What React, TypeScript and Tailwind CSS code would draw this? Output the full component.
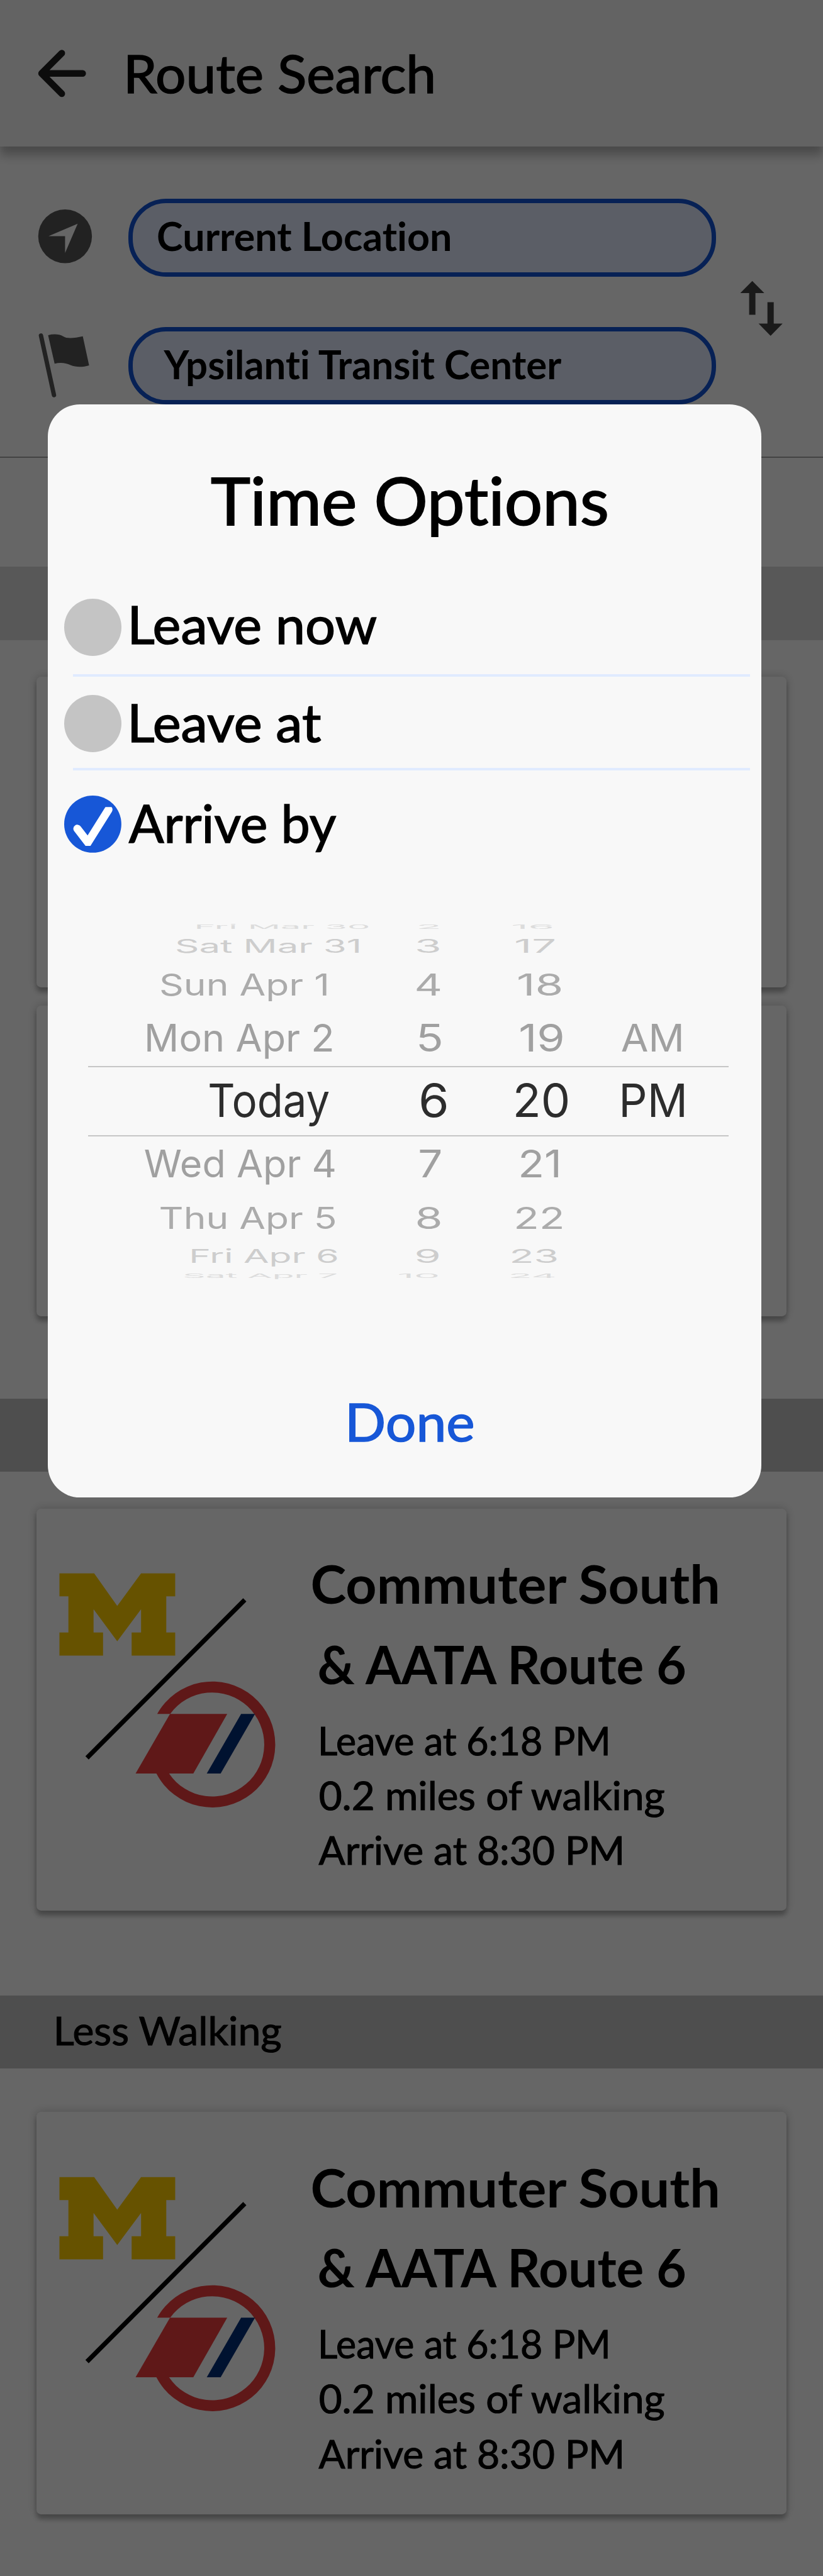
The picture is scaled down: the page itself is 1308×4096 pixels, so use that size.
import React from 'react';

type Face = 'medium' | 'bold' | 'wheel';

// stroke is extra outline thickness, in em, that brings the face to its weight.
const FACES: Record<Face, { family: string; weight: number; stroke: number }> = {
  medium: { family: 'Lato, sans-serif', weight: 400, stroke: 0.018 },
  bold: { family: 'Lato, sans-serif', weight: 700, stroke: 0 },
  wheel: { family: 'Inter, sans-serif', weight: 400, stroke: 0 },
};

const canvas = document.createElement('canvas').getContext('2d')!;

// Measures a string at 100px: ink edges, cap height and baseline position.
function measure(text: string, face: Face) {
  const { family, weight, stroke } = FACES[face];
  canvas.font = `${weight} 100px ${family}`;
  canvas.letterSpacing = '0.01px';
  const m = canvas.measureText(text);
  const cap = canvas.measureText('H').actualBoundingBoxAscent;
  return {
    left: -m.actualBoundingBoxLeft - stroke * 50,
    ink: m.actualBoundingBoxLeft + m.actualBoundingBoxRight + stroke * 100,
    cap,
    baseline: 50 + (m.fontBoundingBoxAscent - m.fontBoundingBoxDescent) / 2,
  };
}

// A line of text whose box is its ink: w wide, cap tall, baseline at the bottom edge.
function Line({
  children,
  w,
  cap,
  face = 'medium',
  size,
  className = '',
  ml = 0,
}: {
  children: string;
  w: number;
  cap: number;
  face?: Face;
  size?: number;
  className?: string;
  ml?: number;
}) {
  const m = measure(children, face);
  const fs = size ?? (cap / m.cap) * 100;
  const k = fs / 100;
  const sx = w / (m.ink * k);
  const sy = cap / (m.cap * k);
  return (
    <div className={`shrink-0 ${className}`} style={{ width: w, height: cap, marginLeft: ml || undefined }}>
      <span
        className="block w-max origin-top-left leading-none whitespace-nowrap [font-variant-ligatures:none]"
        style={{
          fontFamily: FACES[face].family,
          fontWeight: FACES[face].weight,
          fontSize: fs,
          WebkitTextStroke: FACES[face].stroke ? `${FACES[face].stroke}em currentColor` : undefined,
          transform: `translate(${-m.left * k * sx}px, ${cap - m.baseline * k * sy}px) scale(${sx}, ${sy})`,
        }}
      >
        {children}
      </span>
    </div>
  );
}

const CARD = 'ml-16 w-[1312px] rounded-lg bg-white shadow-[0_0_16px_rgba(0,0,0,0.22),0_8px_8px_rgba(0,0,0,0.24)]';

function RouteLogo() {
  return (
    <svg className="mt-[104px] ml-8 h-[428px] w-[400px] shrink-0" viewBox="32 104 400 428">
      <path
        fill="#ffcd00"
        d="M40.2 113.6H101L141.3 170.7L183 113.6H242.7V153.9H227.1V217.1H242.7V257.4H166.5V217.1H183V176.3L141.3 232.4L99.9 176.3V217.1H116.5V257.4H40.2V217.1H55.9V153.9H40.2Z"
      />
      <path d="M88.5 436.5L364.4 160" stroke="#000" strokeWidth="8" />
      <path fill="#ee3d3e" d="M211.2 359.5A110.2 110.2 0 1 1 209.8 464H232A91 91 0 1 0 233.9 359.5Z" />
      <path fill="#ee3d3e" d="M233.6 359.5H333.7L274.4 464H173.4Z" />
      <path fill="#002f78" d="M358 359.5H382.3L322.2 464H297.9Z" />
    </svg>
  );
}

function RouteCard() {
  return (
    <div className={`flex h-[704px] ${CARD}`}>
      <RouteLogo />
      <div className="flex flex-col pt-[101px] pl-[50px]">
        <Line w={711} cap={67} face="bold">Commuter South</Line>
        <Line w={646} cap={67} face="bold" ml={12} className="mt-[73px]">& AATA Route 6</Line>
        <Line w={502} cap={50} ml={15} className="mt-[74px]">Leave at 6:18 PM</Line>
        <Line w={606} cap={50} ml={13} className="mt-[46px]">0.2 miles of walking</Line>
        <Line w={531} cap={50} ml={11} className="mt-[46px]">Arrive at 8:30 PM</Line>
      </div>
    </div>
  );
}

type Cell = [text: string, x: number, w: number];
type WheelRow = { top: number; cap: number; color: string; cells: Cell[] };

const ABOVE: WheelRow[] = [
  { top: 1618, cap: 7.5, color: 'text-[#dcdcdc]', cells: [['Fri Mar 30', 345, 300], ['2', 733, 34], ['16', 897, 69]] },
  { top: 1644.5, cap: 23.5, color: 'text-[#cdcdcd]', cells: [['Sat Mar 31', 309, 318], ['3', 730, 38], ['17', 902, 67]] },
  { top: 1704.5, cap: 38, color: 'text-[#ababab]', cells: [['Sun Apr 1', 282, 289], ['4', 729, 41], ['18', 907, 74]] },
  { top: 1793.5, cap: 48.5, color: 'text-[#a0a0a0]', cells: [['Mon Apr 2', 258, 323], ['5', 733, 38], ['19', 910, 74], ['AM', 1088, 104]] },
];

const SELECTED: WheelRow = {
  top: 1898,
  cap: 58.5,
  color: 'text-[#2d2d2d]',
  cells: [['Today', 367, 209], ['6', 736, 45], ['20', 903, 91], ['PM', 1089, 108]],
};

const BELOW: WheelRow[] = [
  { top: 2013.5, cap: 48, color: 'text-[#a0a0a0]', cells: [['Wed Apr 4', 253, 332], ['7', 734, 36.5], ['21', 911, 65]] },
  { top: 2113, cap: 38, color: 'text-[#ababab]', cells: [['Thu Apr 5', 281, 305], ['8', 730, 40], ['22', 904, 79]] },
  { top: 2187.5, cap: 24, color: 'text-[#cdcdcd]', cells: [['Fri Apr 6', 336, 254], ['9', 729, 39], ['23', 896, 77.5]] },
  { top: 2228.5, cap: 7.5, color: 'text-[#dcdcdc]', cells: [['Sat Apr 7', 322, 266], ['10', 698, 68], ['24', 894, 76]] },
];

function Row({ row, from }: { row: WheelRow; from: number }) {
  return (
    <div className={`flex ${row.color}`} style={{ paddingTop: row.top - from }}>
      {row.cells.map(([text, x, w], i) => {
        const prev = i ? row.cells[i - 1][1] + row.cells[i - 1][2] : 84;
        return (
          <Line key={text} face="wheel" size={76} w={w} cap={row.cap} ml={x - prev}>
            {text}
          </Line>
        );
      })}
    </div>
  );
}

function Rows({ rows, from }: { rows: WheelRow[]; from: number }) {
  return (
    <>
      {rows.map((r, i) => (
        <Row key={r.top} row={r} from={i ? rows[i - 1].top + rows[i - 1].cap : from} />
      ))}
    </>
  );
}

function TimeWheel() {
  return (
    <div className="mt-[126px] h-[617px]">
      <div className="h-[248px]">
        <Rows rows={ABOVE} from={1618} />
      </div>
      <div className="ml-[70px] h-[2px] w-[1120px] bg-[#c6c6c6]" />
      <div className="h-[119px]">
        <Row row={SELECTED} from={1868} />
      </div>
      <div className="ml-[70px] h-[2px] w-[1120px] bg-[#c6c6c6]" />
      <Rows rows={BELOW} from={1989} />
    </div>
  );
}

function TimeOptions() {
  return (
    <div className="absolute top-[708px] left-[84px] h-[1912px] w-[1248px] rounded-[56px] bg-[#f8f8f8] text-black">
      <Line w={694} cap={84} ml={285} className="mt-32">Time Options</Line>
      <div className="mt-32 flex h-[132px] pl-7">
        <div className="size-[100px] shrink-0 rounded-full bg-[#c4c4c4]" />
        <Line w={429} cap={67} ml={18.5} className="mt-[13px]">Leave now</Line>
      </div>
      <div className="ml-11 h-1 w-[1184px] bg-[#e0ebff]" />
      <div className="flex h-40 pt-8 pl-7">
        <div className="size-[100px] shrink-0 rounded-full bg-[#c4c4c4]" />
        <Line w={332} cap={67} ml={18.5} className="mt-[17px]">Leave at</Line>
      </div>
      <div className="ml-11 h-1 w-[1184px] bg-[#e0ebff]" />
      <div className="flex h-36 pt-11 pl-7">
        <svg className="size-[100px] shrink-0" viewBox="0 0 100 100">
          <clipPath id="tick">
            <rect x="10" y="20" width="80" height="68" />
          </clipPath>
          <circle cx="50" cy="50" r="50" fill="#1757d7" />
          <path
            d="M23 58L41.500 82L77.500 24.500"
            fill="none"
            stroke="#fff"
            strokeWidth="14"
            strokeLinecap="round"
            strokeLinejoin="miter"
            clipPath="url(#tick)"
          />
        </svg>
        <Line w={364} cap={67} ml={13} className="mt-[17px]">Arrive by</Line>
      </div>
      <TimeWheel />
      <Line w={217} cap={67} ml={527} className="mt-[222px] text-[#1757d7]">Done</Line>
    </div>
  );
}

function Header() {
  return (
    <header className="relative flex h-64 bg-[#f8f8f8] shadow-[0_0_16px_rgba(0,0,0,0.1),0_16px_16px_rgba(0,0,0,0.24)]">
      <svg className="mt-[82px] ml-[62px] h-[92px] w-[94px] shrink-0" viewBox="62 82 94 92">
        <path
          d="M145 128H73M108.500 92.500L73 128L108.500 163.500"
          fill="none"
          stroke="#1e1e1e"
          strokeWidth="11.500"
          strokeLinecap="round"
          strokeLinejoin="round"
        />
      </svg>
      <Line w={535} cap={67} ml={67} className="mt-[97px]">Route Search</Line>
    </header>
  );
}

const PILL = 'h-[136px] w-[1028px] rounded-[66px] border-8 border-[#1353d5] bg-[#e3ebff]';

function SearchPanel() {
  return (
    <section className="flex h-[543px]">
      <svg className="mt-[111px] ml-16 h-[338px] w-[100px] shrink-0" viewBox="64 367 100 338">
        <circle cx="114" cy="414" r="47" fill="#555" />
        <path d="M136 392L85 413.700H114V443.300Z" fill="#fff" />
        <path d="M71.800 587.800L94.600 692" stroke="#555" strokeWidth="7.600" strokeLinecap="round" />
        <path
          d="M84.300 587C94 584.500 104 585 110.500 589C118 594 131 592 145 589L156 640C145 643.500 133 643.500 123.500 639.500C115 635.500 106 634.500 95.700 637Z"
          fill="#555"
        />
      </svg>
      <div className="flex flex-col gap-[88px] pt-[92px] pl-[60px]">
        <div className={`pt-[34px] pl-[45px] ${PILL}`}>
          <Line w={511} cap={50} face="bold">Current Location</Line>
        </div>
        <div className={`pt-[34px] pl-[55px] ${PILL}`}>
          <Line w={698} cap={50} face="bold">Ypsilanti Transit Center</Line>
        </div>
      </div>
      <svg className="mt-[234px] ml-[38px] h-[100px] w-[84px] shrink-0" viewBox="1290 490 84 100">
        <path d="M1316 492L1337 513H1321.500V551H1310.500V513H1295Z" fill="#424242" />
        <path d="M1348 588L1369 566.500H1353.500V529H1342.500V566.500H1327Z" fill="#424242" />
      </svg>
    </section>
  );
}

export default function App() {
  return (
    <main className="relative h-[4508px] w-full overflow-hidden bg-white text-black [zoom:0.9086]">
      <Header />
      <SearchPanel />
      <div className="h-[2px] bg-[#a8a8a8]" />
      <div className="mt-[191px] h-32 bg-[#dcdcdc]" />
      <div className={`mt-16 h-[544px] ${CARD}`} />
      <div className={`mt-8 h-[544px] ${CARD}`} />
      <div className="mt-36 mb-16 h-32 bg-[#c4c4c4]" />
      <RouteCard />
      <div className="mt-[148px] mb-[76px] h-32 bg-[#c4c4c4] pt-[38px] pl-[99px]">
        <Line w={394} cap={50}>Less Walking</Line>
      </div>
      <RouteCard />
      <div className="absolute inset-0 bg-black/60" />
      <TimeOptions />
    </main>
  );
}
